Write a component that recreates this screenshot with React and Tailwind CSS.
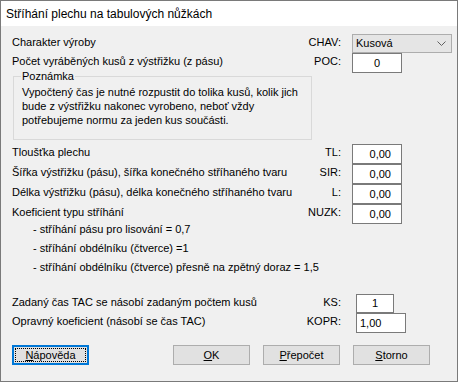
import React from "react";

const font = { fontFamily: '"Liberation Sans", Arial, sans-serif' };

// One line of the dialog: description on the left, short code label, then the field
const Row = ({ text, label, h = "h-[20px]", children }) => (
  <div className={`flex ${h}`}>
    <div className="flex-1 min-w-0 whitespace-nowrap pt-[1px] leading-[14px]">{text}</div>
    <div className="w-[50px] text-right pt-[1px] leading-[14px]">{label}</div>
    <div className="ml-[11px] w-[100px] flex">{children}</div>
  </div>
);

const Field = ({ value, className = "" }) => (
  <div
    className={`h-[20px] bg-white border border-[#7a7a7a] leading-[18px] ${className}`}
  >
    {value}
  </div>
);

const Button = ({ children, focused }) => (
  <button
    className={`w-[77px] h-[20px] bg-[#e1e1e1] text-[11px] leading-[14px] flex items-center justify-center ${
      focused ? "border-2 border-[#0078d7] p-[1px]" : "border border-[#adadad]"
    }`}
  >
    {focused ? (
      <span className="w-full h-full border border-dotted border-black flex items-center justify-center">
        {children}
      </span>
    ) : (
      children
    )}
  </button>
);

export default function App() {
  return (
    <div
      className="w-[458px] h-[382px] border border-[#7a7a7a] bg-[#f0f0f0] flex flex-col text-black text-[11px]"
      style={font}
    >
      {/* Title bar */}
      <div className="h-[25px] bg-white flex items-center pl-[5px] text-[12px] shrink-0">
        Stříhání plechu na tabulových nůžkách
      </div>

      <div className="flex flex-col pl-[11px] pr-[5px] pt-[8px]">
        <Row text="Charakter výroby" label="CHAV:" h="h-[19px]">
          <div className="w-[100px] h-[19px] bg-[#e5e5e5] border border-[#adadad] flex items-center justify-between pl-[3px] pr-[5px]">
            <span>Kusová</span>
            <svg width="9" height="5" viewBox="0 0 9 5">
              <path d="M0.5 0.5 L4.5 4.5 L8.5 0.5" fill="none" stroke="#606060" strokeWidth="1" />
            </svg>
          </div>
        </Row>
        <Row text="Počet vyráběných kusů z výstřižku (z pásu)" label="POC:">
          <Field value="0" className="w-[50px] text-center" />
        </Row>

        {/* Poznámka group */}
        <fieldset className="w-[299px] ml-[1px] -mt-[3px] border border-[#d9d9d9] pl-[8px] pb-[12px] leading-[14px]">
          <legend className="px-[1px] -ml-[1px] leading-[13px]">Poznámka</legend>
          <div className="mt-[2px]">Vypočtený čas je nutné rozpustit do tolika kusů, kolik jich</div>
          <div>bude z výstřižku nakonec vyrobeno, neboť vždy</div>
          <div>potřebujeme normu za jeden kus součásti.</div>
        </fieldset>

        <div className="mt-[4px] flex flex-col">
          <Row text="Tloušťka plechu" label="TL:">
            <Field value="0,00" className="w-[50px] text-right pr-[10px]" />
          </Row>
          <Row text="Šířka výstřižku (pásu), šířka konečného stříhaného tvaru" label="SIR:">
            <Field value="0,00" className="w-[50px] text-right pr-[10px]" />
          </Row>
          <Row text="Délka výstřižku (pásu), délka konečného stříhaného tvaru" label="L:">
            <Field value="0,00" className="w-[50px] text-right pr-[10px]" />
          </Row>
          <Row text="Koeficient typu stříhání" label="NUZK:">
            <Field value="0,00" className="w-[50px] text-right pr-[10px]" />
          </Row>
        </div>

        <div className="-mt-[4px] pl-[21px] leading-[19px]">
          <div>- stříhání pásu pro lisování = 0,7</div>
          <div>- stříhání obdélníku (čtverce) =1</div>
          <div>- stříhání obdélníku (čtverce) přesně na zpětný doraz = 1,5</div>
        </div>

        <div className="mt-[17px] flex flex-col">
          <Row text="Zadaný čas TAC se násobí zadaným počtem kusů" label="KS:" h="h-[19px]">
            <div className="pl-[4px]">
              <div className="w-[38px] h-[19px] bg-white border border-[#7a7a7a] leading-[17px] text-center">1</div>
            </div>
          </Row>
          <Row text="Opravný koeficient (násobí se čas TAC)" label="KOPR:">
            <div className="pl-[4px]">
              <Field value="1,00" className="w-[50px] pl-[3px]" />
            </div>
          </Row>
        </div>

        {/* Buttons */}
        <div className="mt-[12px] flex">
          <Button focused>
            <span>
              <span className="underline">N</span>ápověda
            </span>
          </Button>
          <div className="ml-[84px] flex gap-[13px]">
            <Button>
              <span>
                <span className="underline">O</span>K
              </span>
            </Button>
            <Button>
              <span>
                <span className="underline">P</span>řepočet
              </span>
            </Button>
            <Button>
              <span>
                <span className="underline">S</span>torno
              </span>
            </Button>
          </div>
        </div>
      </div>
    </div>
  );
}
